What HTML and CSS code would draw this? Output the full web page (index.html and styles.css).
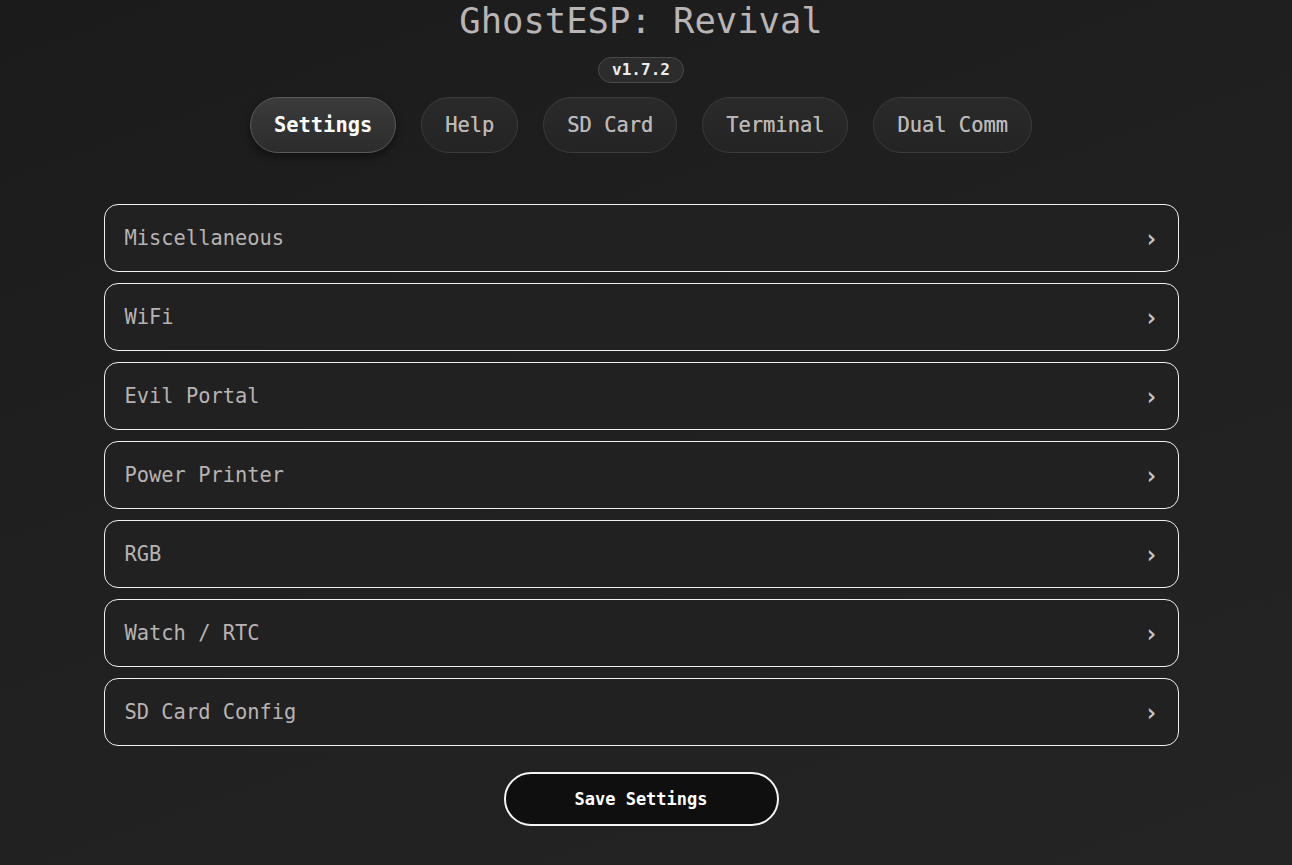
FILE: index.html
```html
<!DOCTYPE html>
<html lang="en">
<head>
<meta charset="utf-8">
<title>GhostESP: Revival</title>
<link rel="stylesheet" href="styles.css">
</head>
<body>
<div class="page">
  <header class="header">
    <h1 class="title">GhostESP: Revival</h1>
    <span class="version">v1.7.2</span>
    <nav class="tabs">
      <button class="tab tab-active">Settings</button>
      <button class="tab">Help</button>
      <button class="tab">SD Card</button>
      <button class="tab">Terminal</button>
      <button class="tab">Dual Comm</button>
    </nav>
  </header>
  <main class="sections">
    <div class="section"><span class="section-name">Miscellaneous</span><span class="chev">›</span></div>
    <div class="section"><span class="section-name">WiFi</span><span class="chev">›</span></div>
    <div class="section"><span class="section-name">Evil Portal</span><span class="chev">›</span></div>
    <div class="section"><span class="section-name">Power Printer</span><span class="chev">›</span></div>
    <div class="section"><span class="section-name">RGB</span><span class="chev">›</span></div>
    <div class="section"><span class="section-name">Watch / RTC</span><span class="chev">›</span></div>
    <div class="section"><span class="section-name">SD Card Config</span><span class="chev">›</span></div>
  </main>
  <div class="actions">
    <button class="save">Save Settings</button>
  </div>
</div>
</body>
</html>
```
FILE: styles.css
```css
html, body {
  margin: 0;
  padding: 0;
  height: 100%;
}
body {
  background: linear-gradient(160deg, #1b1b1b 0%, #202020 45%, #242424 100%);
  color: #bab5b5;
  font-family: "DejaVu Sans Mono", "Liberation Mono", monospace;
  overflow: hidden;
}
.page {
  width: 1282px;
  display: flex;
  flex-direction: column;
  align-items: center;
}
.header {
  display: flex;
  flex-direction: column;
  align-items: center;
}
.title {
  margin: 0;
  font-size: 35.5px;
  font-weight: normal;
  color: #bab5b5;
  line-height: 42px;
}
.version {
  margin-top: 15px;
  height: 24px;
  line-height: 24px;
  padding: 0 13px;
  border: 1px solid #4a4a4a;
  border-radius: 13px;
  background: #2c2c2c;
  color: #ececec;
  font-size: 16px;
  font-weight: bold;
}
.tabs {
  margin-top: 14px;
  display: flex;
  gap: 25px;
  align-items: center;
}
.tab {
  height: 56px;
  padding: 0 23px;
  border-radius: 28px;
  border: 1px solid #3b3b3b;
  background: linear-gradient(180deg, #2a2a2a, #242424);
  color: #bcb7b7;
  font-family: "DejaVu Sans Mono", "Liberation Mono", monospace;
  font-size: 20.4px;
  font-weight: normal;
  text-shadow: 0 0 0.4px #bcb7b7;
  cursor: pointer;
}
.tab-active {
  margin-top: -1px;
  border-color: #5a5a5a;
  background: linear-gradient(180deg, #3b3b3b, #2c2c2c);
  color: #ffffff;
  font-weight: bold;
  text-shadow: none;
  box-shadow: 0 4px 10px rgba(0, 0, 0, 0.45);
}
.sections {
  margin-top: 51px;
  width: 1075px;
  display: flex;
  flex-direction: column;
  gap: 11px;
}
.section {
  height: 68px;
  box-sizing: border-box;
  border: 1.5px solid #f0f0f0;
  border-radius: 14px;
  background: #212121;
  padding: 0 20px;
  display: flex;
  align-items: center;
  justify-content: space-between;
  font-size: 20.4px;
  color: #b8b3b3;
}
.chev {
  font-size: 24px;
  line-height: 24px;
  font-weight: bold;
  color: #c8c4c4;
  margin-right: -1px;
  margin-top: 1px;
}
.actions {
  margin-top: 26px;
}
.save {
  width: 275px;
  height: 54px;
  border: 2px solid #f5f5f5;
  border-radius: 27px;
  background: #0f0f0f;
  color: #ffffff;
  font-family: "DejaVu Sans Mono", "Liberation Mono", monospace;
  font-size: 17px;
  font-weight: bold;
  cursor: pointer;
}
```
